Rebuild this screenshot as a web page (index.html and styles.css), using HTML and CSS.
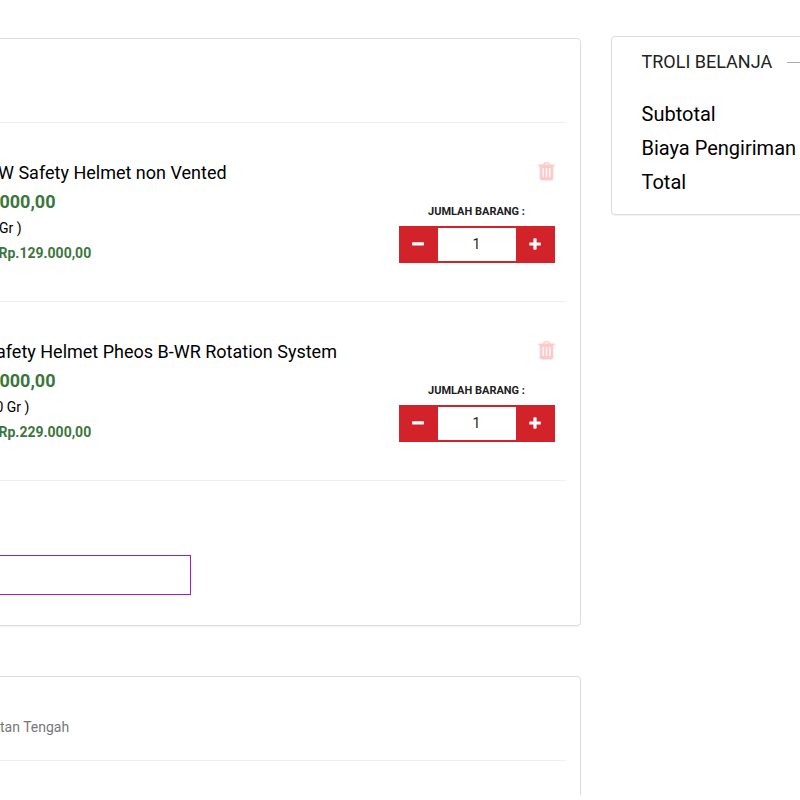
FILE: index.html
```html
<!DOCTYPE html>
<html lang="id">
<head>
<meta charset="utf-8">
<title>Troli Belanja</title>
<link rel="stylesheet" href="styles.css">
</head>
<body>
<svg class="sprite" aria-hidden="true">
  <symbol id="trash" viewBox="0 0 17 19">
    <path fill-rule="evenodd" d="M5 2.500 5.800.8Q6 .3 6.600.3h4Q11.200.3 11.400.8L12.200 2.500H16.200Q16.700 2.500 16.700 3V4.200H15.300V15.800Q15.300 18.500 13 18.500H4Q1.700 18.500 1.700 15.800V4.200H.3V3Q.3 2.500.8 2.500ZM6.500 2.500H10.700L10.300 1.600H6.900ZM4.500 6V15H5.900V6ZM7.800 6V15H9.200V6ZM11.100 6V15H12.500V6Z"/>
  </symbol>
  <symbol id="minus" viewBox="0 0 12 12"><rect x="0" y="4.300" width="12" height="3.200" rx=".7"/></symbol>
  <symbol id="plus" viewBox="0 0 12 12"><path d="M5.100.2h1.800q.7 0 .7.700v3.500h3.500q.7 0 .7.700v1.800q0 .7-.7.700H7.600v3.500q0 .7-.7.700H5.100q-.7 0-.7-.7V7.600H.9q-.7 0-.7-.7V5.100q0-.7.700-.7h3.500V.9q0-.7.700-.7z"/></symbol>
</svg>
<div class="layout">
  <main>
    <section class="card cart">
      <div class="cart-head"></div>
      <article class="item">
        <div class="info">
          <h2 class="name name-a">W Safety Helmet non Vented</h2>
          <p class="price">000,00</p>
          <p class="weight weight-a">Gr )</p>
          <p class="sum">Rp.129.000,00</p>
        </div>
        <div class="actions">
          <svg class="trash"><use href="#trash"/></svg>
          <p class="label">JUMLAH BARANG :</p>
          <div class="qty"><button><svg><use href="#minus"/></svg></button><span class="count">1</span><button><svg><use href="#plus"/></svg></button></div>
        </div>
      </article>
      <article class="item">
        <div class="info">
          <h2 class="name name-b">afety Helmet Pheos B-WR Rotation System</h2>
          <p class="price">000,00</p>
          <p class="weight weight-b">0 Gr )</p>
          <p class="sum">Rp.229.000,00</p>
        </div>
        <div class="actions">
          <svg class="trash"><use href="#trash"/></svg>
          <p class="label">JUMLAH BARANG :</p>
          <div class="qty"><button><svg><use href="#minus"/></svg></button><span class="count">1</span><button><svg><use href="#plus"/></svg></button></div>
        </div>
      </article>
      <div class="field"></div>
    </section>
    <section class="card address">
      <p class="region">tan Tengah</p>
    </section>
  </main>
  <aside class="card summary">
    <h3 class="summary-title"><span>TROLI BELANJA</span></h3>
    <ul>
      <li>Subtotal</li>
      <li>Biaya Pengiriman</li>
      <li>Total</li>
    </ul>
  </aside>
</div>
</body>
</html>
```
FILE: styles.css
```css
* { box-sizing: border-box; }
body { margin: 0; background: #fff; color: #000; font-family: Roboto, sans-serif; overflow: hidden; }
h2, h3, p, ul { margin: 0; padding: 0; font-weight: 400; }
ul { list-style: none; }
.sprite { display: none; }
.layout { display: flex; align-items: flex-start; gap: 30px; height: 795px; overflow: hidden; }
main { flex: 0 0 581px; padding-top: 38px; }
.card { border: 1px solid #ddd; border-radius: 4px; box-shadow: 0 1px 1px rgba(0, 0, 0, .05); background: #fff; }
.cart, .address { margin-left: -20px; padding: 0 15px 0 19px; }
.cart { height: 588px; margin-bottom: 50px; }
.cart-head { height: 84px; border-bottom: 1px solid #eee; }
.item { display: flex; justify-content: space-between; height: 179px; border-bottom: 1px solid #eee; }
.info { padding-top: 38px; white-space: nowrap; }
.name { font-size: 18px; line-height: 24px; }
.name-a { text-indent: -2px; }
.name-b { text-indent: -4px; }
.price { margin-top: 4px; font-size: 18px; line-height: 26px; font-weight: 700; color: #3c763d; text-indent: -.6px; }
.weight { font-size: 14px; line-height: 26px; }
.weight-a { text-indent: -1px; }
.weight-b { text-indent: -4.600px; }
.sum { font-size: 14px; line-height: 24px; font-weight: 700; color: #3c763d; text-indent: -1.500px; }
.actions { width: 156px; margin-right: 10px; padding-top: 39px; }
.trash { display: block; width: 17px; height: 19px; margin-left: auto; fill: #ffc9c9; }
.label { margin-top: 23px; font-size: 11px; line-height: 16px; font-weight: 700; text-align: center; color: #212121; padding-right: 1px; }
.qty { display: flex; margin-top: 6px; height: 37px; padding: 2px 0; background: #d2232a; }
.qty button { flex: 0 0 39px; display: flex; align-items: center; justify-content: center; padding: 0 2px 1px 0; border: 0; background: none; }
.qty svg { width: 12px; height: 12px; fill: #fff; }
.count { flex: 1; background: #fff; color: #222; font-size: 14px; line-height: 33px; text-align: center; padding-right: 1px; }
.field { width: 191px; height: 40px; margin-top: 74px; border: 1px solid #9b1fc8; border-left: 0; }
.address { height: 140px; }
.region { height: 84px; padding-top: 40px; border-bottom: 1px solid #eee; font-size: 14px; line-height: 20px; color: #777; }
.summary { flex: 0 0 400px; height: 179px; margin-top: 36px; padding: 10px 29.500px; }
.summary-title { display: flex; align-items: center; gap: 15px; font-size: 18px; line-height: 30px; color: #222; }
.summary-title::after { content: ""; flex: 1; height: 1px; background: #a6a9bf; }
.summary ul { margin-top: 20px; }
.summary li { font-size: 20px; line-height: 34px; white-space: nowrap; }
```
